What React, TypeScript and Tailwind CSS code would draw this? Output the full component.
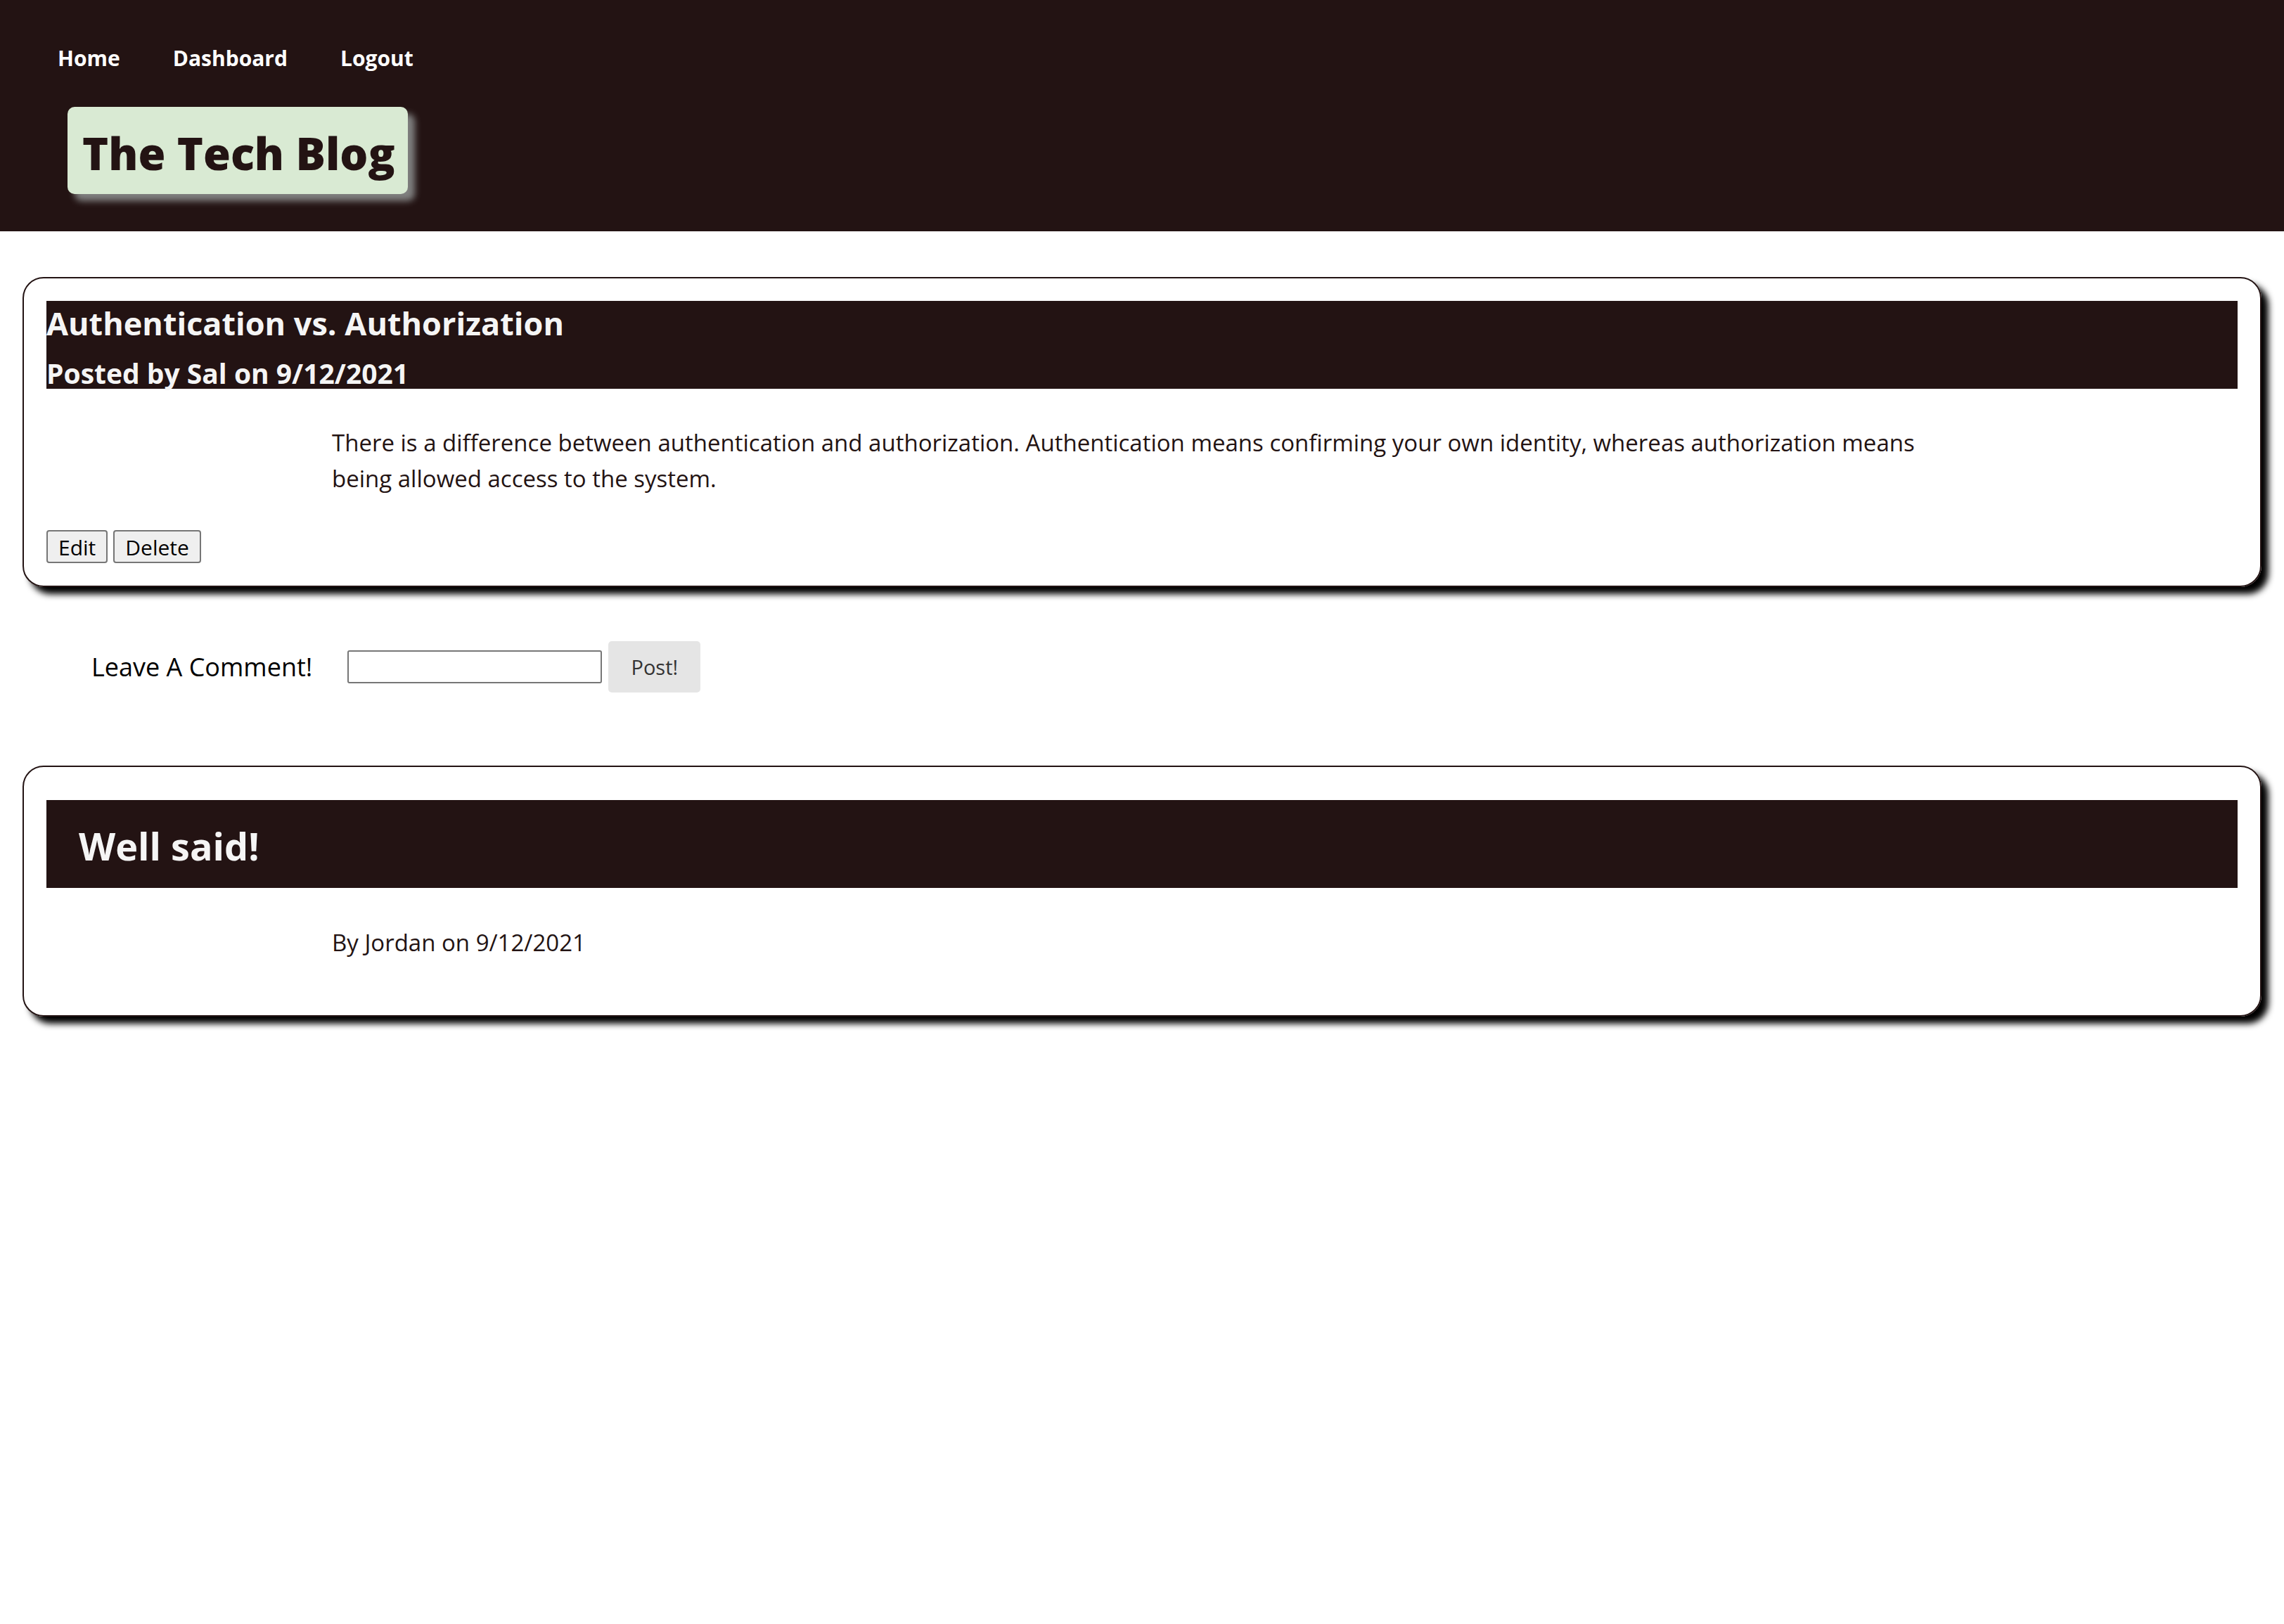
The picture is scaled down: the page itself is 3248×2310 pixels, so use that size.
import React from 'react';

const post = {
  title: 'Authentication vs. Authorization',
  author: 'Sal',
  date: '9/12/2021',
  body: 'There is a difference between authentication and authorization. Authentication means confirming your own identity, whereas authorization means being allowed access to the system.',
};

const comments = [{ text: 'Well said!', author: 'Jordan', date: '9/12/2021' }];

function Header() {
  return (
    <header className="h-[329px] bg-[#231313]">
      <nav className="flex gap-[75px] pl-[82px] pt-[63px] text-[30px] leading-[40px] font-bold text-white">
        <a href="#">Home</a>
        <a href="#">Dashboard</a>
        <a href="#">Logout</a>
      </nav>
      <div className="ml-[96px] mt-[49px] flex h-[124px] w-[484px] items-center rounded-[10px] bg-[#d9ead3] pl-[21px] pt-[6px] shadow-[10px_10px_10px_#808080]">
        <h1 className="text-[63px] leading-none font-extrabold text-[#231313]">The Tech Blog</h1>
      </div>
    </header>
  );
}

export default function App() {
  return (
    <div className="min-h-screen bg-white font-['Open_Sans',sans-serif] text-[#231313]">
      <Header />
      <main className="px-[32px]">
        {/* Post */}
        <section className="mt-[65px] rounded-[30px] border-2 border-[#231313] p-[32px] shadow-[10px_10px_10px_#000]">
          <div className="h-[125px] bg-[#231313] text-[#f5f5f5] font-bold">
            <h2 className="text-[45px] leading-[64px]">{post.title}</h2>
            <h3 className="pt-[16px] text-[39px] leading-[45px]">
              Posted by {post.author} on {post.date}
            </h3>
          </div>
          <p className="mx-[406px] mt-[51px] text-[33px] leading-[51px]">{post.body}</p>
          <div className="mt-[48px] flex gap-[8px]">
            <button className="h-[47px] rounded-[4px] border-2 border-[#767676] bg-[#efefef] px-[15px] text-[30px] text-black">
              Edit
            </button>
            <button className="h-[47px] rounded-[4px] border-2 border-[#767676] bg-[#efefef] px-[15px] text-[30px] text-black">
              Delete
            </button>
          </div>
        </section>

        {/* Comment form */}
        <form className="mt-[77px] flex items-center pl-[98px]" onSubmit={(e) => e.preventDefault()}>
          <label className="text-[36px] text-black">Leave A Comment!</label>
          <input
            type="text"
            className="ml-[50px] h-[47px] w-[362px] rounded-[3px] border-2 border-[#767676] bg-white"
          />
          <button className="ml-[9px] h-[73px] w-[131px] rounded-[5px] bg-[#e5e5e5] text-[29px] text-[#333]">
            Post!
          </button>
        </form>

        {/* Comments */}
        {comments.map((c, i) => (
          <section
            key={i}
            className="mt-[104px] rounded-[30px] border-2 border-[#231313] px-[32px] pt-[47px] pb-[32px] shadow-[10px_10px_10px_#000]"
          >
            <div className="flex h-[125px] items-center bg-[#231313] pl-[46px] pt-[4px]">
              <h2 className="text-[54px] leading-none font-bold text-[#f5f5f5]">{c.text}</h2>
            </div>
            <p className="mx-[406px] mt-[52px] mb-[46px] text-[33px] leading-[51px]">
              By {c.author} on {c.date}
            </p>
          </section>
        ))}
      </main>
    </div>
  );
}
